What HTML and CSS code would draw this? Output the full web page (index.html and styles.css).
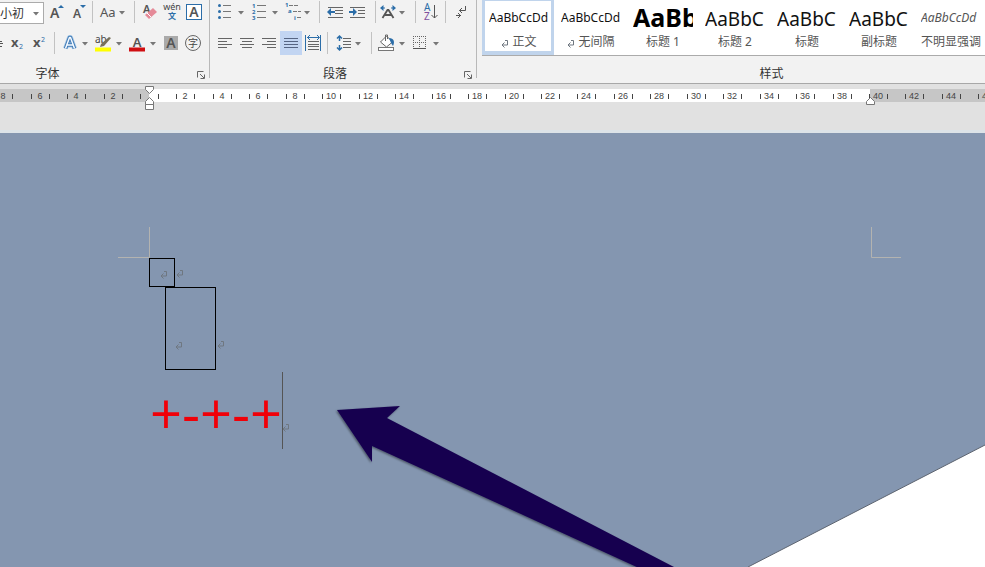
FILE: index.html
```html
<!DOCTYPE html>
<html lang="zh-CN">
<head>
<meta charset="utf-8">
<title>文档</title>
<link rel="stylesheet" href="styles.css">
</head>
<body>
<svg width="0" height="0" class="defs" aria-hidden="true">
  <defs>
    <path id="drop" d="M0 0h6l-3 3.500z" fill="#777"/>
    <g id="mark" fill="none" stroke="#6f7780" stroke-width="1"><path d="M4 .5h2.500v4.500H1M3.500 2.500L1 5l2.500 2.500"/></g>
    <g id="launch" fill="none" stroke="#666"><path d="M.5 6.500v-6h6M3 3l4 4M7.500 3.500v4h-4"/></g>
  </defs>
</svg>

<header class="ribbon">
  <section class="group font-group">
    <div class="row">
      <label class="size"><select aria-label="字号"><option>小初</option></select>
        <svg width="8" height="5" viewBox="-1 -1 8 5"><use href="#drop"/></svg></label>
      <button class="w24" aria-label="增大字号"><svg viewBox="45 0 24 24"><text x="50" y="18" class="ltr" font-size="14">A</text><path d="M58 8l3-3 3 3z" fill="#2b6da8"/></svg></button>
      <button class="w22" aria-label="减小字号"><svg viewBox="69 0 22 24"><text x="73" y="18" class="ltr" font-size="12">A</text><path d="M80 5h6l-3 3z" fill="#2b6da8"/></svg></button>
      <i class="sep"></i>
      <button class="w40" aria-label="更改大小写"><svg viewBox="93 0 40 24"><text x="100" y="17" class="ltr thin" font-size="13">Aa</text><use href="#drop" x="119" y="11"/></svg></button>
      <i class="sep"></i>
      <button class="w26" aria-label="清除格式"><svg viewBox="135 0 26 24"><text x="143" y="13" class="ltr" font-size="11">A</text><path d="M145 15l8-7 4 4-8 7z" fill="#e58a98"/><path d="M147 13l4 4" stroke="#fff"/></svg></button>
      <button class="w22" aria-label="拼音指南"><svg viewBox="161 0 22 24"><text x="172" y="10" text-anchor="middle" font-size="9" class="sans">wén</text><text x="172" y="19" text-anchor="middle" font-size="8" class="cjk blue bold">文</text></svg></button>
      <button class="w22" aria-label="字符边框"><svg viewBox="183 0 22 24"><rect x="186.500" y="4.500" width="15" height="15" fill="#fff" stroke="#2b6da8"/><text x="194" y="17" text-anchor="middle" class="ltr" font-size="14">A</text></svg></button>
    </div>
    <div class="row">
      <button class="w6" aria-label="删除线"><svg viewBox="0 31 6 24"><path d="M0 41.500h2M0 43.500h3M0 46.500h2" stroke="#555"/></svg></button>
      <button class="w22" aria-label="下标"><svg viewBox="6 31 22 24"><text x="11" y="47" class="ltr bold" font-size="13">x</text><text x="19" y="49" font-size="7" class="sans blue">2</text></svg></button>
      <button class="w24" aria-label="上标"><svg viewBox="28 31 24 24"><text x="33" y="47" class="ltr bold" font-size="13">x</text><text x="41" y="42" font-size="7" class="sans blue">2</text></svg></button>
      <i class="sep gap2"></i>
      <button class="w36" aria-label="文本效果"><svg viewBox="55 31 36 24"><g fill="none" stroke-linejoin="round"><path d="M65.500 48.500l4-11h1l4 11M67 45h6" stroke="#a9c8e6" stroke-width="5"/><path d="M65.500 48.500l4-11h1l4 11M67 45h6" stroke="#3f7ab5" stroke-width="3.500"/><path d="M65.500 48.500l4-11h1l4 11M67 45h6" stroke="#f4f9ff" stroke-width="1.500"/></g><use href="#drop" x="82" y="42"/></svg></button>
      <button class="w34" aria-label="突出显示"><svg viewBox="91 31 34 24"><path d="M95 47.500h16v4H95z" fill="#ff0"/><text x="95" y="43" font-size="10" class="sans">ab</text><path d="M109 37l2 1-7 8-4 1 1-3z" fill="#77705b"/><use href="#drop" x="116" y="42"/></svg></button>
      <button class="w36" aria-label="字体颜色"><svg viewBox="125 31 36 24"><text x="137" y="47" text-anchor="middle" class="ltr" font-size="13">A</text><path d="M129 47.500h16v4h-16z" fill="#d00f12"/><use href="#drop" x="150" y="42"/></svg></button>
      <button class="w20" aria-label="字符底纹"><svg viewBox="161 31 20 24"><path d="M164 36h14v14h-14z" fill="#aaa"/><text x="171" y="48" text-anchor="middle" class="ltr" font-size="14">A</text></svg></button>
      <button class="w24" aria-label="带圈字符"><svg viewBox="181 31 24 24"><circle cx="193" cy="43" r="7.500" fill="none" stroke="#666"/><text x="193" y="47" text-anchor="middle" font-size="10" class="cjk">字</text></svg></button>
    </div>
    <footer><h2>字体</h2><button class="launch" aria-label="字体设置"><svg viewBox="0 0 9 9"><use href="#launch"/></svg></button></footer>
  </section>

  <section class="group para-group">
    <div class="row">
      <button class="w36" aria-label="项目符号"><svg viewBox="212 0 36 24"><path d="M223 5.500h8M223 11.500h8M223 17.500h8" stroke="#777"/><g fill="#2b6da8"><circle cx="219.500" cy="5.500" r="1.500"/><circle cx="219.500" cy="11.500" r="1.500"/><circle cx="219.500" cy="17.500" r="1.500"/></g><use href="#drop" x="238" y="11"/></svg></button>
      <button class="w34" aria-label="编号"><svg viewBox="248 0 34 24"><path d="M257 5.500h9M257 11.500h9M257 17.500h9" stroke="#777"/><g class="sans blue bold" font-size="6"><text x="252" y="8">1</text><text x="252" y="14">2</text><text x="252" y="20">3</text></g><use href="#drop" x="272" y="11"/></svg></button>
      <button class="w36" aria-label="多级列表"><svg viewBox="282 0 36 24"><path d="M289 5.500h10M293 11.500h8M297 17.500h5" stroke="#777" stroke-dasharray="4 1"/><g class="sans blue bold" font-size="6"><text x="285" y="7">1</text><text x="288" y="13">a</text><text x="294" y="20">i</text></g><use href="#drop" x="304" y="11"/></svg></button>
      <i class="sep"></i>
      <button class="w26" aria-label="减少缩进量"><svg viewBox="320 0 26 24"><path d="M328 7.500h15M335 10.500h8M335 13.500h8M328 17.500h15" stroke="#666"/><path d="M327 12l4-4v3h4v2h-4v3z" fill="#2b6da8"/></svg></button>
      <button class="w28" aria-label="增加缩进量"><svg viewBox="346 0 28 24"><path d="M350 7.500h15M358 10.500h7M358 13.500h7M350 17.500h15" stroke="#666"/><path d="M357 12l-4-4v3h-4v2h4v3z" fill="#2b6da8"/></svg></button>
      <i class="sep"></i>
      <button class="w38" aria-label="中文版式"><svg viewBox="376 0 38 24"><path d="M382.500 18l5-8h1l5 8M385 15h6.500" fill="none" stroke="#555" stroke-width="1.800"/><path d="M380 8l3.500-3v6zM396 8l-3.500-3v6z" fill="#2b6da8"/><path d="M383 8h2M391 8h2" stroke="#2b6da8"/><use href="#drop" x="399" y="11"/></svg></button>
      <i class="sep"></i>
      <button class="w28" aria-label="排序"><svg viewBox="416 0 28 24"><g font-size="10" class="sans"><text x="424" y="11" class="blue">A</text><text x="424" y="20" class="violet">Z</text></g><path d="M434.500 5v13M431.500 15l3 3 3-3" fill="none" stroke="#555"/></svg></button>
      <i class="sep"></i>
      <button class="w28" aria-label="显示编辑标记"><svg viewBox="446 0 28 24"><path d="M465.500 6v4.500h-6M462 8l-2.500 2.500 2.500 2.500M456 15.500h5M458 13l2.500 2.500L458 18" fill="none" stroke="#555"/></svg></button>
    </div>
    <div class="row">
      <button class="w26" aria-label="左对齐"><svg viewBox="212 31 26 24"><path d="M218 38.500h14M218 41.500h9M218 44.500h14M218 47.500h9" stroke="#666"/></svg></button>
      <button class="w22" aria-label="居中"><svg viewBox="238 31 22 24"><path d="M240 38.500h14M242 41.500h10M240 44.500h14M242 47.500h10" stroke="#666"/></svg></button>
      <button class="w20" aria-label="右对齐"><svg viewBox="260 31 20 24"><path d="M262 38.500h14M267 41.500h9M262 44.500h14M267 47.500h9" stroke="#666"/></svg></button>
      <button class="w22 on" aria-label="两端对齐" aria-pressed="true"><svg viewBox="280 31 22 24"><path d="M284 38.500h14M284 41.500h14M284 44.500h14M284 47.500h14" stroke="#566583"/></svg></button>
      <button class="w24" aria-label="分散对齐"><svg viewBox="302 31 24 24"><path d="M308 41.500h11M308 44.500h11M308 46.500h11M308 49.500h11" stroke="#666"/><path d="M305.500 35v16M320.500 35v16M307 37.500h12M310 35l-2.500 2.500L310 40M317 35l2.500 2.500L317 40" fill="none" stroke="#2b6da8"/></svg></button>
      <i class="sep"></i>
      <button class="w42" aria-label="行距"><svg viewBox="328 31 42 24"><path d="M343 38.500h8M343 41.500h8M343 44.500h8M343 47.500h8" stroke="#666"/><path d="M339.500 36v5M339.500 45v5M337 38.500l2.500-2.500 2.500 2.500M337 47.500l2.500 2.500 2.500-2.500" fill="none" stroke="#2b6da8" stroke-width="1.500"/><use href="#drop" x="355" y="42"/></svg></button>
      <i class="sep"></i>
      <button class="w40" aria-label="底纹"><svg viewBox="372 31 40 24"><path d="M380.500 42l6-6 6 6-6 5z" fill="#fff" stroke="#666"/><path d="M385.500 41v-6h2v4" fill="none" stroke="#666"/><path d="M389 38c5 0 6 4 4 8l-2-3z" fill="#2b6da8"/><rect x="378.500" y="47.500" width="15" height="3" fill="#fff" stroke="#777"/><use href="#drop" x="399" y="42"/></svg></button>
      <button class="w32" aria-label="边框"><svg viewBox="412 31 32 24"><path d="M413 36.500h13M413 42.500h13M413.500 36v12M419.500 36v12M425.500 36v12" stroke="#666" stroke-dasharray="1 1"/><path d="M413 48.500h13" stroke="#555"/><use href="#drop" x="433" y="42"/></svg></button>
    </div>
    <footer><h2>段落</h2><button class="launch" aria-label="段落设置"><svg viewBox="0 0 9 9"><use href="#launch"/></svg></button></footer>
  </section>

  <section class="group style-group">
    <div class="gallery">
      <button class="style on"><span class="sample">AaBbCcDd</span><span class="name"><svg class="ret" viewBox="0 0 8 8"><use href="#mark"/></svg>正文</span></button>
      <button class="style"><span class="sample">AaBbCcDd</span><span class="name"><svg class="ret" viewBox="0 0 8 8"><use href="#mark"/></svg>无间隔</span></button>
      <button class="style"><span class="sample h1">AaBb</span><span class="name">标题 1</span></button>
      <button class="style"><span class="sample h2">AaBbC</span><span class="name">标题 2</span></button>
      <button class="style"><span class="sample h2">AaBbC</span><span class="name">标题</span></button>
      <button class="style"><span class="sample h2">AaBbC</span><span class="name">副标题</span></button>
      <button class="style"><span class="sample em">AaBbCcDd</span><span class="name">不明显强调</span></button>
    </div>
    <footer><h2>样式</h2></footer>
  </section>
</header>

<div class="ruler"><svg id="ruler" aria-label="标尺"></svg></div>

<main class="page">
  <svg class="art" aria-hidden="true">
    <defs><filter id="shade" x="-10%" y="-10%" width="120%" height="120%"><feDropShadow dx="-1" dy="1" stdDeviation="1" flood-color="#000" flood-opacity=".45"/></filter></defs>
    <path d="M985 312L748 434H985z" fill="#fff"/>
    <path d="M985 312L748 434" stroke="#5d6470"/>
    <path d="M149.500 94v30.500H118M871.500 94v30.500H901" fill="none" stroke="#b3b3b0"/>
    <path d="M337 277L400 273 387 285 674 434 688 441H652L372 313V329z" fill="#170050" filter="url(#shade)"/>
    <use href="#mark" x="160" y="138"/><use href="#mark" x="176" y="137"/>
    <use href="#mark" x="175" y="209"/><use href="#mark" x="217" y="208"/>
    <use href="#mark" x="282" y="291"/>
  </svg>
  <div class="box small"></div>
  <div class="box large"></div>
  <p class="typed">+-+-+</p>
  <i class="caret"></i>
</main>
<script src="ruler.js"></script>
</body>
</html>
```
FILE: styles.css
```css
* { box-sizing: border-box; }
body {
  margin: 0;
  min-height: 100vh;
  display: flex;
  flex-direction: column;
  overflow: hidden;
  background: #e1e1e1;
  color: #333;
  font: 12px/16px "Noto Sans", "Noto Sans CJK SC", sans-serif;
}
.defs { position: absolute; }
button { margin: 0; padding: 0; border: 0; background: none; font: inherit; color: inherit; }

.ribbon { display: flex; background: #f2f2f2; border-bottom: 1px solid #a8a8a8; }
.group { display: flex; flex-direction: column; flex: none; position: relative; }
.font-group { width: 210px; }
.para-group { width: 267px; padding-left: 2px; }
.style-group { flex: 1; min-width: 0; padding-left: 5px; }
.font-group::after, .para-group::after {
  content: "";
  position: absolute;
  right: 0;
  top: 0;
  bottom: 5px;
  width: 1px;
  background: #b9b9b9;
}
.row { display: flex; height: 24px; margin-bottom: 7px; }
.row button { flex: none; height: 24px; }
.row button svg { display: block; width: 100%; height: 100%; }
.row .on { background: #c2d5f2; }
.sep { flex: none; width: 1px; height: 22px; margin: 1px 0 0 1px; background: #c2c2c2; }
.gap2 { margin-left: 2px; }
.w6 { width: 6px; }
.w20 { width: 20px; }
.w22 { width: 22px; }
.w24 { width: 24px; }
.w26 { width: 26px; }
.w28 { width: 28px; }
.w32 { width: 32px; }
.w34 { width: 34px; }
.w36 { width: 36px; }
.w38 { width: 38px; }
.w40 { width: 40px; }
.w42 { width: 42px; }

.ltr { font-family: "Noto Sans", sans-serif; font-weight: 600; fill: #555; }
.thin { font-weight: 400; }
.bold { font-weight: 700; }
.sans { font-family: "Noto Sans", sans-serif; fill: #444; }
.cjk { font-family: "Noto Sans CJK SC", sans-serif; fill: #444; }
.blue { fill: #2b6da8; }
.violet { fill: #80519e; }

.size {
  display: flex;
  align-items: center;
  flex: none;
  width: 44px;
  height: 22px;
  margin: 2px 1px 0 0;
  background: #fff;
  border: 1px solid #ababab;
  border-left: 0;
}
.size select {
  appearance: none;
  width: 32px;
  border: 0;
  padding: 0;
  background: none;
  color: #333;
  font: 12px/16px "Noto Sans CJK SC", sans-serif;
}

footer { display: flex; align-items: center; height: 19px; padding: 0 4px; margin-top: 2px; }
footer h2 { flex: 1; margin: 0; text-align: center; font-size: 12px; line-height: 16px; font-weight: 400; }
.font-group footer h2 { padding-right: 106px; }
.para-group footer h2 { padding-right: 10px; }
.style-group footer h2 { padding-left: 76px; }
.launch { flex: none; width: 9px; height: 9px; margin-top: 4px; }
.launch svg { display: block; width: 9px; height: 9px; }

.gallery { display: flex; height: 56px; margin-bottom: 6px; background: #fff; border-bottom: 1px solid #ababab; overflow: hidden; }
.style {
  display: flex;
  flex-direction: column;
  align-items: center;
  flex: none;
  width: 72px;
  height: 55px;
  padding: 4px 0 0 2px;
  border: solid transparent;
  border-width: 1px 3px 4px;
}
.style.on { border-color: #c0d4ec; }
.sample { width: 60px; height: 29px; overflow: hidden; font-size: 12px; line-height: 26px; text-align: left; color: #111; white-space: nowrap; }
.sample.h1 { font-size: 25px; line-height: 24px; font-weight: 700; color: #000; }
.sample.h2 { font-size: 19px; line-height: 28px; }
.sample.em { font-style: italic; color: #555; }
.name { display: flex; align-items: center; gap: 3px; line-height: 16px; color: #555; white-space: nowrap; }
.ret { width: 8px; height: 8px; margin-top: 3px; }

.ruler { height: 49px; padding-top: 2px; border-bottom: 3px solid #dce3e8; overflow: hidden; }
.ruler svg { display: block; width: 100%; height: 26px; }
.ruler text { font: 9px "Liberation Sans", sans-serif; fill: #444; text-anchor: middle; }

.page { position: relative; flex: 1; min-height: 434px; background: #8496b0; overflow: hidden; }
.art { position: absolute; inset: 0; width: 100%; height: 100%; }
.box { position: absolute; border: 1px solid #000; }
.small { left: 149px; top: 125px; width: 26px; height: 29px; }
.large { left: 165px; top: 154px; width: 51px; height: 83px; }
.typed {
  position: absolute;
  left: 150px;
  top: 241px;
  margin: 0;
  font: 500 56px/76px "Open Sans", "Noto Sans", sans-serif;
  color: #f00008;
}
.caret { position: absolute; left: 282px; top: 239px; width: 1px; height: 77px; background: #555; }
```
FILE: ruler.js
```js
// Draws the horizontal ruler: grey margins, white text area, ticks and numbers.
const ruler = document.getElementById("ruler");
const start = 149, end = 870, step = 36.45;
let out = `<rect y="3" width="100%" height="13" fill="#c6c6c6"/>
<rect x="${start}" y="3" width="${end - start}" height="13" fill="#fff"/>`;
for (let i = -4; start + i * step < innerWidth + 9; i++) {
  const x = Math.round(start + i * step);
  if (i !== 0) out += `<text x="${x}" y="13">${Math.abs(i * 2)}</text>`;
  out += `<path d="M${x - 9 + .5} 8v5M${x + 9 + .5} 8v5" stroke="#444"/>`;
}
out += `<g fill="#fff" stroke="#777">
<path d="M145.500 .5h8v3l-4 4-4-4z"/>
<path d="M145.500 18.500v-3l4-4 4 4v3zM145.500 18.500h8v5h-8z"/>
<path d="M866.500 18.500v-3l4-4 4 4v3z"/></g>`;
ruler.innerHTML = out;
```
